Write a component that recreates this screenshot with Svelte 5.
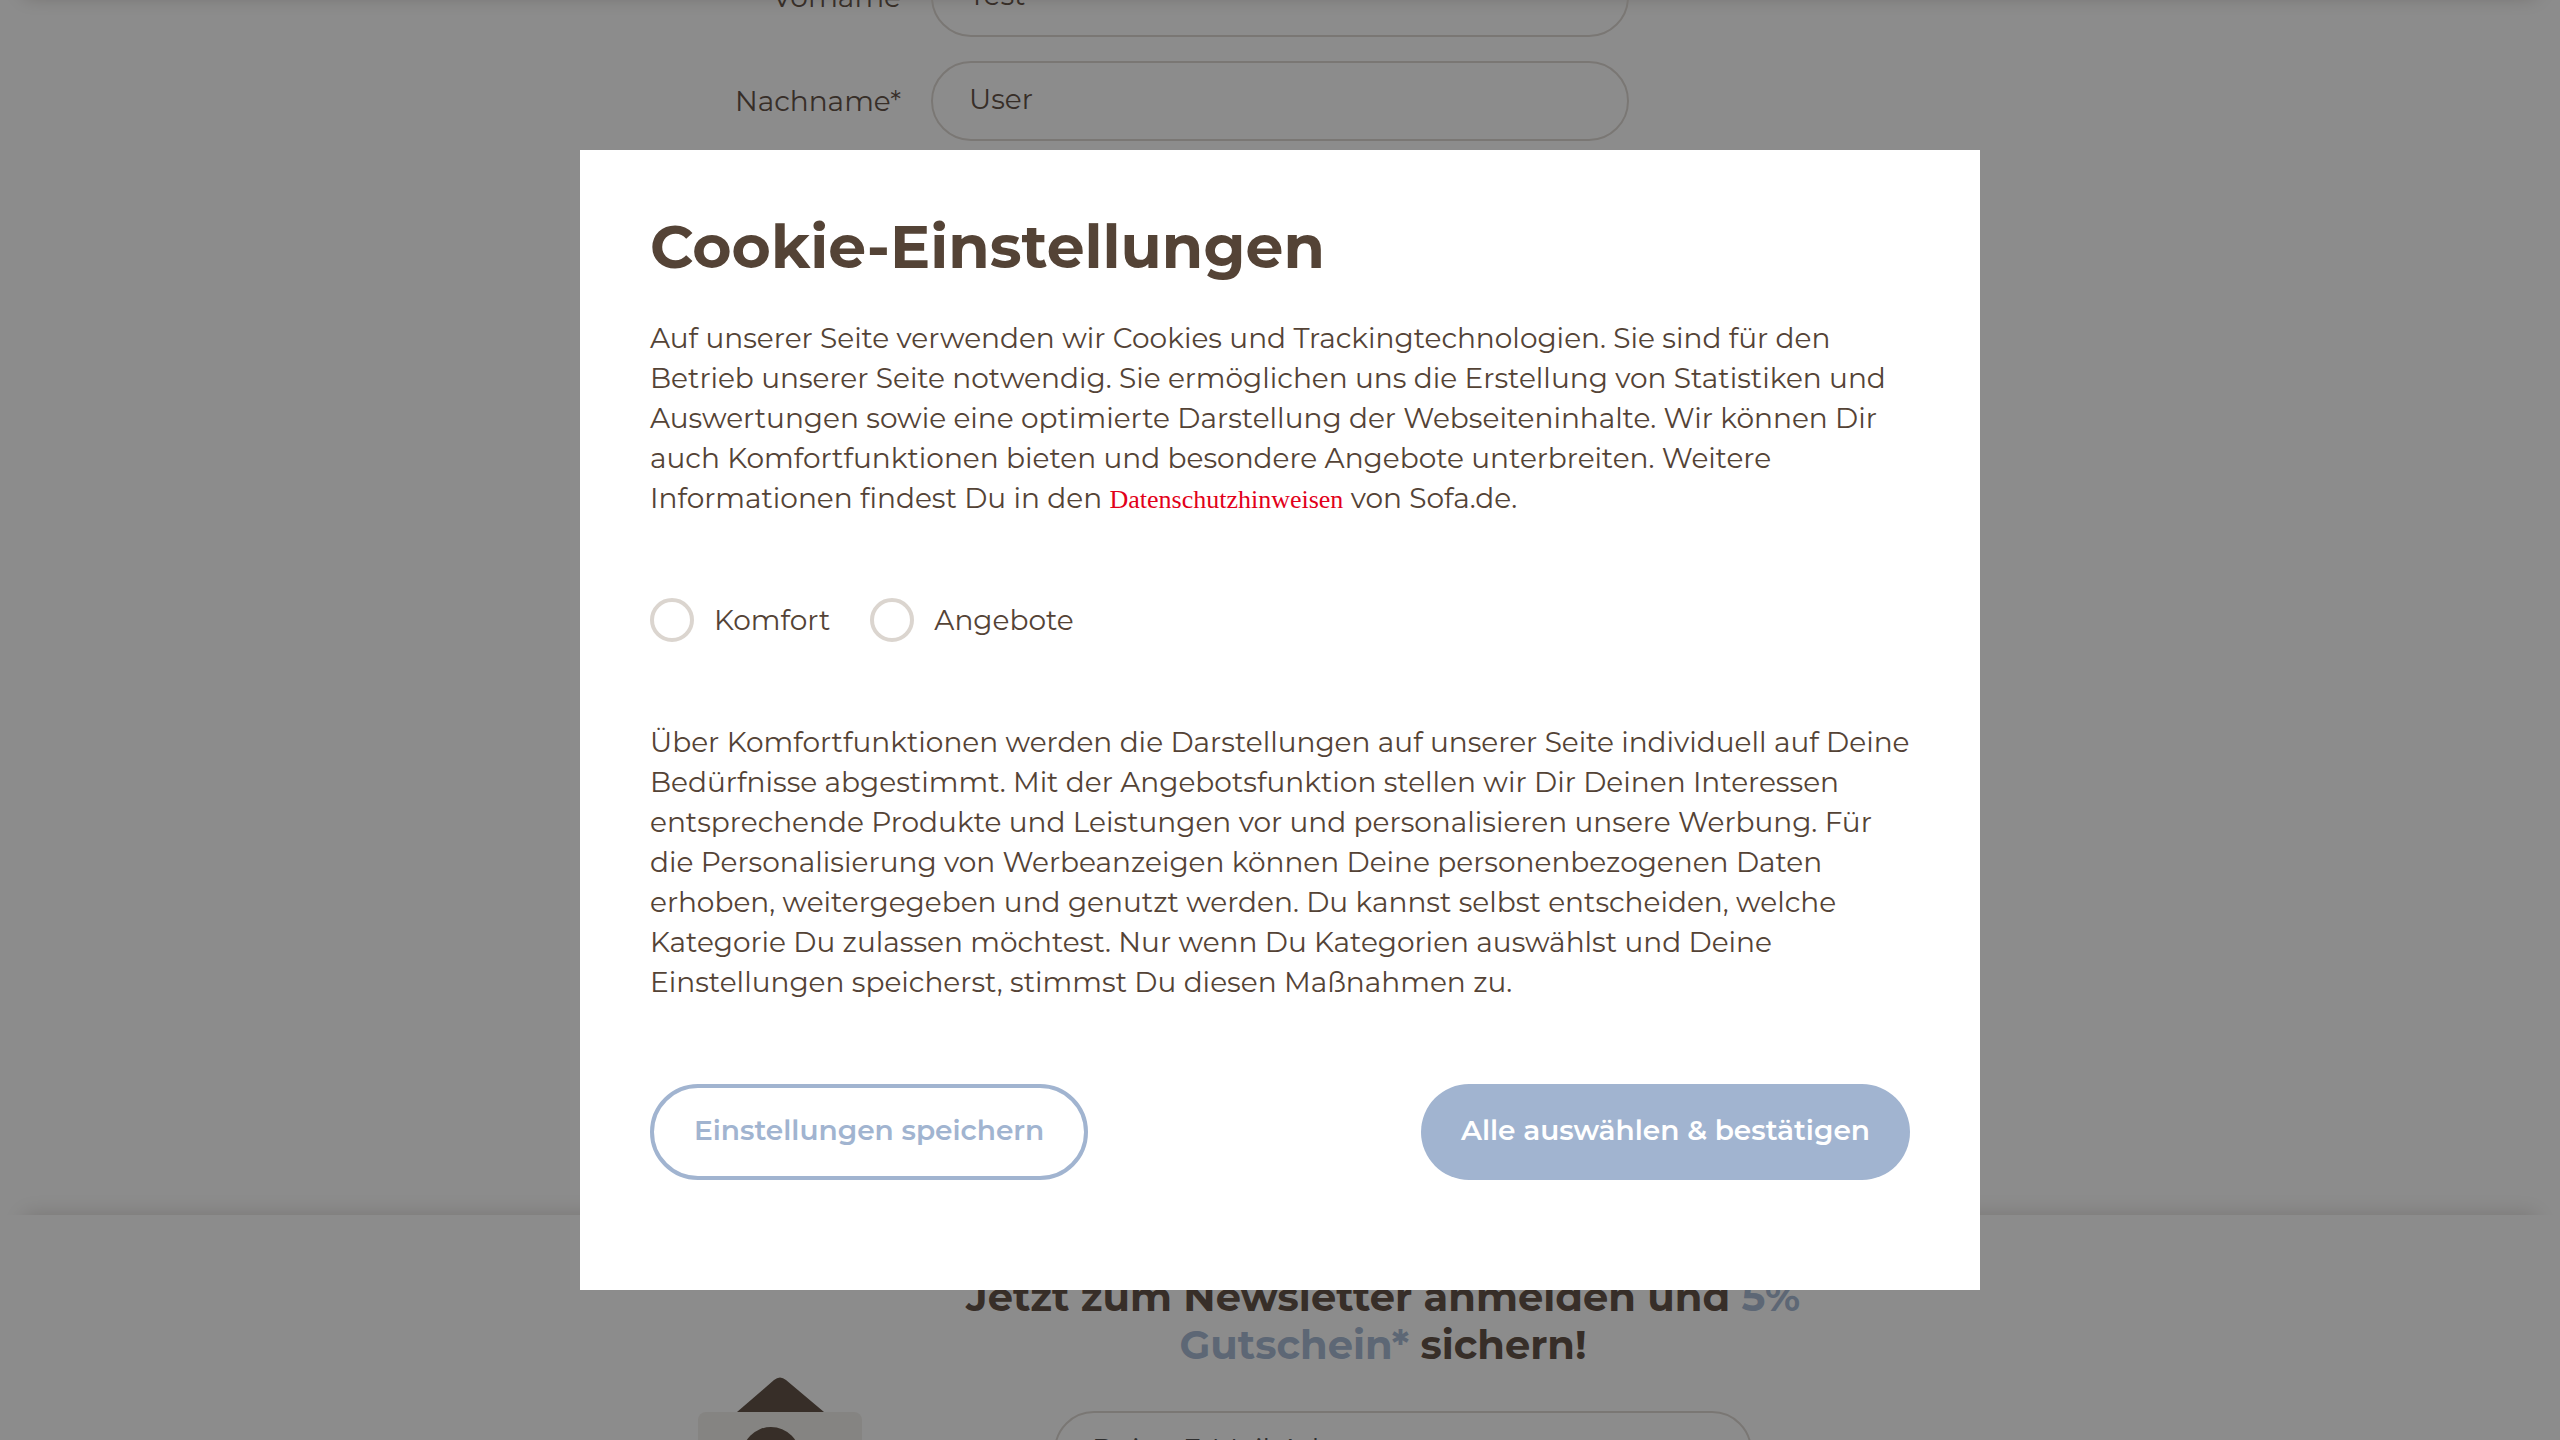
<script>
  let categories = $state([
    { id: 'comfort', label: 'Komfort', checked: false },
    { id: 'offers', label: 'Angebote', checked: false }
  ]);
</script>

<div class="page">
  <header></header>
  <main>
    <form>
      <label for="first">Vorname</label>
      <input id="first" type="text" value="Test" />
      <label for="last">Nachname*</label>
      <input id="last" type="text" value="User" />
    </form>
  </main>
  <footer>
    <svg class="house" viewBox="0 0 164 120" aria-hidden="true">
      <path d="M39 35 L76 3 Q82 -2 88 3 L126 35 Z" fill="#544336" />
      <rect y="35" width="164" height="100" rx="8" fill="#f1eeea" />
      <circle cx="73" cy="79" r="29" fill="#544336" />
    </svg>
    <div class="newsletter">
      <h2>Jetzt zum Newsletter anmelden und <em>5% Gutschein*</em> sichern!</h2>
      <input type="email" aria-label="E-Mail-Adresse" placeholder="Deine E-Mail-Adresse" />
    </div>
  </footer>
</div>

<div class="overlay">
  <section class="dialog" role="dialog" aria-modal="true" aria-labelledby="title">
    <h1 id="title">Cookie-Einstellungen</h1>
    <p>
      Auf unserer Seite verwenden wir Cookies und Trackingtechnologien. Sie sind für den
      Betrieb unserer Seite notwendig. Sie ermöglichen uns die Erstellung von Statistiken und
      Auswertungen sowie eine optimierte Darstellung der Webseiteninhalte. Wir können Dir
      auch Komfortfunktionen bieten und besondere Angebote unterbreiten. Weitere
      Informationen findest Du in den <a href="#datenschutz">Datenschutzhinweisen</a> von Sofa.de.
    </p>
    <div class="choices">
      {#each categories as category (category.id)}
        <label>
          <input type="checkbox" bind:checked={category.checked} />
          <span>{category.label}</span>
        </label>
      {/each}
    </div>
    <p>
      Über Komfortfunktionen werden die Darstellungen auf unserer Seite individuell auf Deine
      Bedürfnisse abgestimmt. Mit der Angebotsfunktion stellen wir Dir Deinen Interessen
      entsprechende Produkte und Leistungen vor und personalisieren unsere Werbung. Für
      die Personalisierung von Werbeanzeigen können Deine personenbezogenen Daten
      erhoben, weitergegeben und genutzt werden. Du kannst selbst entscheiden, welche
      Kategorie Du zulassen möchtest. Nur wenn Du Kategorien auswählst und Deine
      Einstellungen speicherst, stimmst Du diesen Maßnahmen zu.
    </p>
    <div class="actions">
      <button type="button" class="outline">Einstellungen speichern</button>
      <button type="button" class="solid">Alle auswählen &amp; bestätigen</button>
    </div>
  </section>
</div>

<style>
  :global(body) {
    overflow: hidden;
    background: #fff;
  }
  .page,
  .overlay,
  input,
  button {
    font-family: Montserrat, 'Open Sans', sans-serif;
    font-size: 28px;
    line-height: 40px;
    font-variant-ligatures: none;
    color: #544336;
  }
  .page {
    position: relative;
    z-index: 0;
    height: 100vh;
    overflow: hidden;
    background: #fff;
  }
  header {
    height: 20px;
    margin: -24px 24px 4px;
    box-shadow: 0 0 20px rgba(84, 67, 54, 0.35);
  }
  main {
    box-sizing: border-box;
    height: calc(100vh - 225px);
    overflow: hidden;
  }
  form {
    display: grid;
    grid-template-columns: 1fr 698px 1fr;
    column-gap: 30px;
    row-gap: 24px;
    margin-top: -43px;
    align-items: center;
  }
  form label {
    grid-column: 1;
    text-align: right;
  }
  form input,
  .newsletter input {
    box-sizing: border-box;
    width: 100%;
    height: 80px;
    padding: 0 36px 4px;
    border: 2px solid #dbd5cf;
    border-radius: 40px;
    background: transparent;
  }
  input::placeholder {
    color: #444;
    opacity: 1;
  }
  footer {
    position: relative;
    display: flex;
    gap: 192px;
    padding: 58px 0 0 698px;
    background: #fff;
  }
  footer::before {
    content: '';
    position: absolute;
    z-index: -1;
    inset: 0 24px auto;
    height: 80px;
    box-shadow: 0 0 20px rgba(84, 67, 54, 0.25);
  }
  .house {
    width: 164px;
    margin-top: 104px;
    flex: none;
  }
  .newsletter {
    width: 698px;
  }
  h2 {
    margin: 0 -96px 42px -136px;
    padding: 0 20px;
    font-size: 40px;
    line-height: 48px;
    font-weight: 700;
    text-align: center;
  }
  em {
    font-style: normal;
    color: #a1b4d0;
  }
  .overlay {
    position: fixed;
    inset: 0;
    z-index: 1;
    display: flex;
    align-items: center;
    justify-content: center;
    background: rgba(25, 25, 25, 0.5);
  }
  .dialog {
    box-sizing: border-box;
    width: 1400px;
    max-width: 100%;
    padding: 60px 70px 110px;
    background: #fff;
  }
  h1 {
    margin: 0 0 34px;
    font-size: 60px;
    line-height: 74px;
    font-weight: 700;
  }
  p {
    margin: 0;
  }
  a {
    font-family: 'Liberation Serif', serif;
    font-size: 26px;
    line-height: 30px;
    color: #e2001a;
    text-decoration: none;
  }
  .choices {
    display: flex;
    gap: 40px;
    margin: 80px 0;
  }
  .choices label {
    display: flex;
    align-items: center;
    gap: 20px;
  }
  .choices input {
    appearance: none;
    box-sizing: border-box;
    width: 44px;
    height: 44px;
    margin: 0;
    border: 4px solid #dbd5cf;
    border-radius: 50%;
  }
  .choices input:checked {
    background: #a1b4d0;
  }
  .actions {
    display: flex;
    justify-content: space-between;
    margin-top: 82px;
  }
  button {
    height: 96px;
    padding: 0 40px 4px;
    border: 0;
    border-radius: 48px;
    font-weight: 600;
    cursor: pointer;
  }
  .outline {
    border: 4px solid #a1b4d0;
    background: #fff;
    color: #a1b4d0;
  }
  .solid {
    background: #a1b4d0;
    color: #fff;
  }
</style>
